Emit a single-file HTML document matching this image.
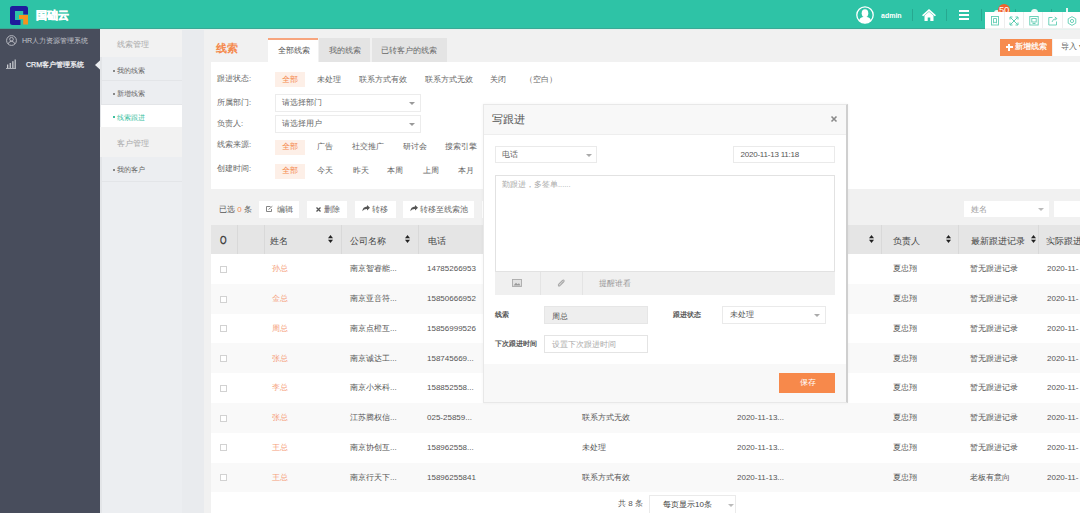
<!DOCTYPE html>
<html><head><meta charset="utf-8"><style>
*{margin:0;padding:0;box-sizing:border-box}
html,body{width:1080px;height:513px;overflow:hidden;background:#f1f1f1;font-family:"Liberation Sans",sans-serif;color:#555;font-size:8px}
.a{position:absolute}
.t{position:absolute;white-space:nowrap;line-height:12px;height:12px}
svg{position:absolute;overflow:visible}
</style></head><body>
<div class="a" style="left:0px;top:0px;width:1080px;height:28px;background:#2ec3a6"></div>
<svg style="left:10px;top:6px" width="18" height="19" viewBox="0 0 18 19"><path d="M2.5 0H15.5Q18 0 18 2.5V8.5H13.2V5H5V14H10.5V19H2.5Q0 19 0 16.5V2.5Q0 0 2.5 0Z" fill="#1f1c9c"/><path d="M9 9H18V18.5H13.2V13H9Z" fill="#f7931e"/></svg>
<div class="t" style="left:35.5px;top:8.8px;font-size:10.5px;color:#fff;font-weight:bold;-webkit-text-stroke:0.6px #fff">国础云</div>
<svg style="left:856px;top:6px" width="18" height="18" viewBox="0 0 18 18"><circle cx="9" cy="9" r="8.2" fill="none" stroke="#fff" stroke-width="1.3"/><ellipse cx="9" cy="7.2" rx="3.3" ry="4" fill="#fff"/><path d="M3 15Q3.5 11.5 7 11H11Q14.5 11.5 15 15Q12.5 17.2 9 17.2Q5.5 17.2 3 15Z" fill="#fff"/></svg>
<div class="t" style="left:881px;top:9.8px;font-size:7px;color:#fff;font-weight:bold">admin</div>
<div class="a" style="left:912px;top:9px;width:1px;height:12px;background:#27a890"></div>
<svg style="left:922px;top:9px" width="14" height="12" viewBox="0 0 14 12"><path d="M7 0L14 6.2L12.8 7.3L7 2.2L1.2 7.3L0 6.2Z" fill="#fff"/><path d="M2.5 6.5L7 2.8L11.5 6.5V12H8.3V8.5H5.7V12H2.5Z" fill="#fff"/></svg>
<div class="a" style="left:946px;top:9px;width:1px;height:12px;background:#27a890"></div>
<div class="a" style="left:959px;top:10px;width:10px;height:2px;background:#fff"></div>
<div class="a" style="left:959px;top:14px;width:10px;height:2px;background:#fff"></div>
<div class="a" style="left:959px;top:18px;width:10px;height:2px;background:#fff"></div>
<div class="a" style="left:981px;top:9px;width:1px;height:12px;background:#27a890"></div>
<div class="a" style="left:1015px;top:9px;width:1px;height:4px;background:#27a890"></div>
<div class="a" style="left:1051px;top:9px;width:1px;height:4px;background:#27a890"></div>
<div class="a" style="left:994px;top:10px;width:6px;height:3px;background:#e9f7f3;border-radius:3px 3px 0 0"></div>
<div class="a" style="left:1031px;top:9px;width:7px;height:4px;background:#e9f7f3;border-radius:4px 4px 0 0"></div>
<div class="a" style="left:1066px;top:8px;width:2px;height:5px;background:#e9f7f3"></div>
<div class="a" style="left:998px;top:3.5px;width:12px;height:12px;background:#f0622b;border-radius:50%"></div>
<div class="t" style="left:999px;top:3.5999999999999996px;font-size:9.5px;color:#fff;width:10px;text-align:center;letter-spacing:-0.3px">50</div>
<div class="a" style="left:985px;top:12px;width:95px;height:16px;background:#fff"></div>
<div class="a" style="left:1004px;top:12px;width:1px;height:16px;background:#eeeeee"></div>
<div class="a" style="left:1023px;top:12px;width:1px;height:16px;background:#eeeeee"></div>
<div class="a" style="left:1042px;top:12px;width:1px;height:16px;background:#eeeeee"></div>
<div class="a" style="left:1062px;top:12px;width:1px;height:16px;background:#eeeeee"></div>
<svg style="left:990px;top:16px" width="10" height="10" viewBox="0 0 10 10" fill="none" stroke="#5fcdb2" stroke-width="0.9"><rect x="1.5" y="0.5" width="7" height="8.5"/><path d="M3.5 2.5H6.5V7L5 6L3.5 7Z"/></svg>
<svg style="left:1009px;top:16px" width="10" height="10" viewBox="0 0 10 10" fill="none" stroke="#5fcdb2" stroke-width="1"><path d="M1.2 1.2L8.8 8.8M8.8 1.2L1.2 8.8"/><path d="M1 3.5V1H3.5M6.5 1H9V3.5M1 6.5V9H3.5M6.5 9H9V6.5"/></svg>
<svg style="left:1028.5px;top:16px" width="10" height="10" viewBox="0 0 10 10" fill="none" stroke="#5fcdb2" stroke-width="0.9"><rect x="0.8" y="0.5" width="8.4" height="8.5"/><rect x="2.8" y="2.5" width="4.4" height="3.5"/><path d="M3.5 7.5H6.5"/></svg>
<svg style="left:1047.5px;top:16px" width="10" height="10" viewBox="0 0 10 10" fill="none" stroke="#5fcdb2" stroke-width="0.9"><path d="M4.5 1.5H0.8V9H8.5V5.5"/><path d="M4 6Q4.5 3 8.5 2.5M6.8 1L8.8 2.5L7.2 4.3"/></svg>
<svg style="left:1067px;top:16px" width="10" height="10" viewBox="0 0 10 10" fill="none" stroke="#5fcdb2" stroke-width="0.9"><path d="M5 0.6L8.8 2.8V7.2L5 9.4L1.2 7.2V2.8Z"/><circle cx="5" cy="5" r="1.6"/></svg>
<div class="a" style="left:0px;top:28px;width:100px;height:485px;background:#484d5c"></div>
<svg style="left:6px;top:35px" width="11" height="11" viewBox="0 0 11 11" fill="none" stroke="#bfc1c7" stroke-width="0.9"><circle cx="5.5" cy="5.5" r="4.9"/><circle cx="5.5" cy="4.2" r="1.8"/><path d="M2.2 8.8Q3 6.3 5.5 6.3Q8 6.3 8.8 8.8"/></svg>
<div class="t" style="left:22px;top:35px;font-size:7.1px;color:#c4c6cc;">HR人力资源管理系统</div>
<svg style="left:6px;top:59px" width="10" height="10" viewBox="0 0 10 10" fill="#c9cbd0"><rect x="0" y="9" width="10" height="0.8"/><rect x="1" y="5.5" width="1.3" height="3.5"/><rect x="3.6" y="4" width="1.3" height="5"/><rect x="6.2" y="2.2" width="1.3" height="6.8"/><rect x="8.6" y="0.5" width="1.2" height="8.5"/></svg>
<div class="t" style="left:26px;top:59px;font-size:7.1px;color:#f0f0f2;-webkit-text-stroke:0.25px #f0f0f2">CRM客户管理系统</div>
<svg style="left:95px;top:60px" width="6" height="10" viewBox="0 0 6 10"><path d="M0 5L5.5 0V10Z" fill="#eceef1"/></svg>
<div class="a" style="left:100px;top:28px;width:82px;height:485px;background:#eceef1"></div>
<div class="a" style="left:100px;top:28px;width:2px;height:485px;background:#e3e5e8"></div>
<div class="a" style="left:182px;top:28px;width:22px;height:485px;background:#e9ebee"></div>
<div class="a" style="left:100px;top:28px;width:82px;height:29px;background:#f2f2f2"></div>
<div class="t" style="left:117px;top:39px;font-size:8px;color:#a8a8a8;">线索管理</div>
<div class="a" style="left:102px;top:80px;width:80px;height:1px;background:#e3e5e8"></div>
<div class="a" style="left:113px;top:70px;width:2px;height:2px;background:#888"></div>
<div class="t" style="left:117px;top:65px;font-size:7px;color:#666;">我的线索</div>
<div class="a" style="left:102px;top:104px;width:80px;height:1px;background:#e3e5e8"></div>
<div class="a" style="left:113px;top:92.5px;width:2px;height:2px;background:#888"></div>
<div class="t" style="left:117px;top:87.5px;font-size:7px;color:#666;">新增线索</div>
<div class="a" style="left:101px;top:105px;width:81px;height:23px;background:#fff"></div>
<div class="a" style="left:113px;top:116px;width:2px;height:2px;background:#3cbf9f"></div>
<div class="t" style="left:117px;top:111.5px;font-size:7px;color:#3cbf9f;">线索跟进</div>
<div class="a" style="left:100px;top:127px;width:82px;height:30px;background:#f2f2f2"></div>
<div class="t" style="left:117px;top:138px;font-size:8px;color:#a8a8a8;">客户管理</div>
<div class="a" style="left:113px;top:169px;width:2px;height:2px;background:#888"></div>
<div class="t" style="left:117px;top:164px;font-size:7px;color:#666;">我的客户</div>
<div class="a" style="left:102px;top:181px;width:80px;height:1px;background:#e3e5e8"></div>
<div class="a" style="left:0px;top:28px;width:985px;height:1px;background:#3aa996"></div>
<div class="a" style="left:100px;top:29px;width:980px;height:1px;background:#e6f2ef"></div>
<div class="t" style="left:216px;top:42px;font-size:11px;color:#f58a4e;font-weight:bold">线索</div>
<div class="a" style="left:268px;top:38px;width:50px;height:24px;background:#fff;border-top:2px solid #f7a57e"></div>
<div class="t" style="left:277.5px;top:44.5px;font-size:8px;color:#555;">全部线索</div>
<div class="a" style="left:319px;top:38px;width:51px;height:24px;background:#e4e4e4"></div>
<div class="t" style="left:328.5px;top:44.7px;font-size:8px;color:#666;">我的线索</div>
<div class="a" style="left:372px;top:38px;width:75px;height:24px;background:#e4e4e4"></div>
<div class="t" style="left:381px;top:44.7px;font-size:8px;color:#666;">已转客户的线索</div>
<div class="a" style="left:1000px;top:39px;width:52px;height:17px;background:#f78c4f"></div>
<div class="a" style="left:1006px;top:46px;width:6.5px;height:2px;background:#fff"></div>
<div class="a" style="left:1008.25px;top:43.5px;width:2px;height:7px;background:#fff"></div>
<div class="t" style="left:1015px;top:41.2px;font-size:7.7px;color:#fff;-webkit-text-stroke:0.2px #fff">新增线索</div>
<div class="a" style="left:1053px;top:39px;width:30px;height:17px;background:#fff"></div>
<div class="t" style="left:1061px;top:41px;font-size:8px;color:#666;">导入 ▾</div>
<div class="a" style="left:211px;top:62px;width:869px;height:127px;background:#fff"></div>
<div class="t" style="left:217px;top:73px;font-size:7.5px;color:#666;">跟进状态:</div>
<div class="a" style="left:275px;top:72px;width:30px;height:15px;background:#fdefe7"></div>
<div class="t" style="left:290px;top:74px;font-size:8px;color:#f58a4e;transform:translateX(-50%)">全部</div>
<div class="t" style="left:329px;top:74px;font-size:8px;color:#666;transform:translateX(-50%)">未处理</div>
<div class="t" style="left:383px;top:74px;font-size:8px;color:#666;transform:translateX(-50%)">联系方式有效</div>
<div class="t" style="left:449px;top:74px;font-size:8px;color:#666;transform:translateX(-50%)">联系方式无效</div>
<div class="t" style="left:498px;top:74px;font-size:8px;color:#666;transform:translateX(-50%)">关闭</div>
<div class="t" style="left:541px;top:74px;font-size:8px;color:#666;transform:translateX(-50%)">（空白）</div>
<div class="t" style="left:217px;top:97px;font-size:7.5px;color:#666;">所属部门:</div>
<div class="a" style="left:275px;top:94px;width:146px;height:18px;background:#fff;border:1px solid #ececec"></div>
<div class="t" style="left:282px;top:97px;font-size:7.5px;color:#666;">请选择部门</div>
<div class="a" style="left:409px;top:102px;border:3px solid transparent;border-top:3px solid #999;border-bottom:0"></div>
<div class="t" style="left:217px;top:117.7px;font-size:7.5px;color:#666;">负责人:</div>
<div class="a" style="left:275px;top:115px;width:146px;height:18px;background:#fff;border:1px solid #ececec"></div>
<div class="t" style="left:282px;top:118px;font-size:7.5px;color:#666;">请选择用户</div>
<div class="a" style="left:409px;top:123px;border:3px solid transparent;border-top:3px solid #999;border-bottom:0"></div>
<div class="t" style="left:217px;top:139px;font-size:7.5px;color:#666;">线索来源:</div>
<div class="a" style="left:275px;top:140px;width:30px;height:15px;background:#fdefe7"></div>
<div class="t" style="left:290px;top:140.5px;font-size:8px;color:#f58a4e;transform:translateX(-50%)">全部</div>
<div class="t" style="left:325px;top:140.5px;font-size:8px;color:#666;transform:translateX(-50%)">广告</div>
<div class="t" style="left:368px;top:140.5px;font-size:8px;color:#666;transform:translateX(-50%)">社交推广</div>
<div class="t" style="left:414.6px;top:140.5px;font-size:8px;color:#666;transform:translateX(-50%)">研讨会</div>
<div class="t" style="left:461px;top:140.5px;font-size:8px;color:#666;transform:translateX(-50%)">搜索引擎</div>
<div class="t" style="left:217px;top:163px;font-size:7.5px;color:#666;">创建时间:</div>
<div class="a" style="left:275px;top:164px;width:30px;height:15px;background:#fdefe7"></div>
<div class="t" style="left:290px;top:164.5px;font-size:8px;color:#f58a4e;transform:translateX(-50%)">全部</div>
<div class="t" style="left:325px;top:164.5px;font-size:8px;color:#666;transform:translateX(-50%)">今天</div>
<div class="t" style="left:360.6px;top:164.5px;font-size:8px;color:#666;transform:translateX(-50%)">昨天</div>
<div class="t" style="left:395px;top:164.5px;font-size:8px;color:#666;transform:translateX(-50%)">本周</div>
<div class="t" style="left:430.7px;top:164.5px;font-size:8px;color:#666;transform:translateX(-50%)">上周</div>
<div class="t" style="left:465.6px;top:164.5px;font-size:8px;color:#666;transform:translateX(-50%)">本月</div>
<div class="t" style="left:219px;top:204px;font-size:8px;color:#555;">已选 <span style="color:#f58a4e">0</span> 条</div>
<div class="a" style="left:259px;top:201px;width:40px;height:17px;background:#fff"></div>
<div class="a" style="left:307px;top:201px;width:40px;height:17px;background:#fff"></div>
<div class="a" style="left:355px;top:201px;width:41px;height:17px;background:#fff"></div>
<div class="a" style="left:403px;top:201px;width:71px;height:17px;background:#fff"></div>
<div class="a" style="left:482px;top:201px;width:30px;height:17px;background:#fff"></div>
<svg style="left:266px;top:206px" width="7" height="6" viewBox="0 0 7 6" fill="none" stroke="#777" stroke-width="0.9"><path d="M4.5 0.5H0.5V5.5H5.5V3"/><path d="M2.5 3.5L6.3 0.3"/></svg>
<div class="t" style="left:277px;top:204px;font-size:8px;color:#666;">编辑</div>
<svg style="left:315.5px;top:206.5px" width="5" height="5" viewBox="0 0 5 5" fill="none" stroke="#555" stroke-width="1.3"><path d="M0.5 0.5L4.5 4.5M4.5 0.5L0.5 4.5"/></svg>
<div class="t" style="left:324px;top:204px;font-size:8px;color:#666;">删除</div>
<svg style="left:362px;top:205px" width="8" height="7" viewBox="0 0 8 7" fill="#555"><path d="M5 0L8 2.8L5 5.6V4Q2 3.8 0.3 6.3Q0.8 1.8 5 1.5Z"/></svg>
<div class="t" style="left:372px;top:204px;font-size:8px;color:#666;">转移</div>
<svg style="left:410px;top:205px" width="8" height="7" viewBox="0 0 8 7" fill="#555"><path d="M5 0L8 2.8L5 5.6V4Q2 3.8 0.3 6.3Q0.8 1.8 5 1.5Z"/></svg>
<div class="t" style="left:420px;top:204px;font-size:8px;color:#666;">转移至线索池</div>
<div class="a" style="left:964px;top:201px;width:85px;height:16px;background:#fff"></div>
<div class="t" style="left:971px;top:204px;font-size:8px;color:#999;">姓名</div>
<div class="a" style="left:1038px;top:208px;border:3px solid transparent;border-top:3px solid #bbb;border-bottom:0"></div>
<div class="a" style="left:1054px;top:201px;width:30px;height:16px;background:#fff"></div>
<div class="a" style="left:211px;top:225px;width:869px;height:29px;background:#e5e5e5"></div>
<div class="a" style="left:237px;top:225px;width:1px;height:29px;background:#d9d9d9"></div>
<div class="a" style="left:264px;top:225px;width:1px;height:29px;background:#d9d9d9"></div>
<div class="a" style="left:341px;top:225px;width:1px;height:29px;background:#d9d9d9"></div>
<div class="a" style="left:418px;top:225px;width:1px;height:29px;background:#d9d9d9"></div>
<div class="a" style="left:881px;top:225px;width:1px;height:29px;background:#d9d9d9"></div>
<div class="a" style="left:958px;top:225px;width:1px;height:29px;background:#d9d9d9"></div>
<div class="a" style="left:1038px;top:225px;width:1px;height:29px;background:#d9d9d9"></div>
<div class="t" style="left:219.5px;top:234px;font-size:10.5px;color:#333;transform:scaleX(.8);transform-origin:left;-webkit-text-stroke:0.3px #333">O</div>
<div class="t" style="left:270px;top:235px;font-size:8.5px;color:#444;">姓名</div>
<svg style="left:328px;top:235px" width="5" height="8" viewBox="0 0 5 8" fill="#222"><path d="M2.5 0L5 3.3H0Z"/><path d="M2.5 8L5 4.7H0Z"/></svg>
<div class="t" style="left:350px;top:235px;font-size:8.5px;color:#444;">公司名称</div>
<svg style="left:405px;top:235px" width="5" height="8" viewBox="0 0 5 8" fill="#222"><path d="M2.5 0L5 3.3H0Z"/><path d="M2.5 8L5 4.7H0Z"/></svg>
<div class="t" style="left:428px;top:235px;font-size:8.5px;color:#444;">电话</div>
<svg style="left:869px;top:235px" width="5" height="8" viewBox="0 0 5 8" fill="#222"><path d="M2.5 0L5 3.3H0Z"/><path d="M2.5 8L5 4.7H0Z"/></svg>
<div class="t" style="left:893px;top:235px;font-size:8.5px;color:#444;">负责人</div>
<svg style="left:946px;top:235px" width="5" height="8" viewBox="0 0 5 8" fill="#222"><path d="M2.5 0L5 3.3H0Z"/><path d="M2.5 8L5 4.7H0Z"/></svg>
<div class="t" style="left:971px;top:235px;font-size:8.5px;color:#444;">最新跟进记录</div>
<svg style="left:1031px;top:235px" width="5" height="8" viewBox="0 0 5 8" fill="#222"><path d="M2.5 0L5 3.3H0Z"/><path d="M2.5 8L5 4.7H0Z"/></svg>
<div class="t" style="left:1046px;top:235px;font-size:8.5px;color:#444;">实际跟进</div>
<div class="a" style="left:211px;top:254px;width:869px;height:30px;background:#fff"></div>
<div class="a" style="left:220px;top:266px;width:7px;height:7px;background:#fff;border:1px solid #d2d2d2"></div>
<div class="t" style="left:272px;top:263.2px;font-size:8px;color:#f5a07a;">孙总</div>
<div class="t" style="left:350px;top:263.2px;font-size:8px;color:#555;">南京智睿能...</div>
<div class="t" style="left:427px;top:263.2px;font-size:8px;color:#555;">14785266953</div>
<div class="t" style="left:893px;top:263.2px;font-size:8px;color:#555;">夏忠翔</div>
<div class="t" style="left:970px;top:263.2px;font-size:8px;color:#555;">暂无跟进记录</div>
<div class="t" style="left:1047px;top:263.2px;font-size:8px;color:#555;">2020-11-</div>
<div class="a" style="left:211px;top:284px;width:869px;height:30px;background:#f9f9f9"></div>
<div class="a" style="left:220px;top:296px;width:7px;height:7px;background:#fff;border:1px solid #d2d2d2"></div>
<div class="t" style="left:272px;top:293.0px;font-size:8px;color:#f5a07a;">金总</div>
<div class="t" style="left:350px;top:293.0px;font-size:8px;color:#555;">南京亚音符...</div>
<div class="t" style="left:427px;top:293.0px;font-size:8px;color:#555;">15850666952</div>
<div class="t" style="left:893px;top:293.0px;font-size:8px;color:#555;">夏忠翔</div>
<div class="t" style="left:970px;top:293.0px;font-size:8px;color:#555;">暂无跟进记录</div>
<div class="t" style="left:1047px;top:293.0px;font-size:8px;color:#555;">2020-11-</div>
<div class="a" style="left:211px;top:314px;width:869px;height:29px;background:#fff"></div>
<div class="a" style="left:220px;top:325px;width:7px;height:7px;background:#fff;border:1px solid #d2d2d2"></div>
<div class="t" style="left:272px;top:322.8px;font-size:8px;color:#f5a07a;">周总</div>
<div class="t" style="left:350px;top:322.8px;font-size:8px;color:#555;">南京点橙互...</div>
<div class="t" style="left:427px;top:322.8px;font-size:8px;color:#555;">15856999526</div>
<div class="t" style="left:893px;top:322.8px;font-size:8px;color:#555;">夏忠翔</div>
<div class="t" style="left:970px;top:322.8px;font-size:8px;color:#555;">暂无跟进记录</div>
<div class="t" style="left:1047px;top:322.8px;font-size:8px;color:#555;">2020-11-</div>
<div class="a" style="left:211px;top:343px;width:869px;height:30px;background:#f9f9f9"></div>
<div class="a" style="left:220px;top:355px;width:7px;height:7px;background:#fff;border:1px solid #d2d2d2"></div>
<div class="t" style="left:272px;top:352.59999999999997px;font-size:8px;color:#f5a07a;">张总</div>
<div class="t" style="left:350px;top:352.59999999999997px;font-size:8px;color:#555;">南京诚达工...</div>
<div class="t" style="left:427px;top:352.59999999999997px;font-size:8px;color:#555;">158745669...</div>
<div class="t" style="left:893px;top:352.59999999999997px;font-size:8px;color:#555;">夏忠翔</div>
<div class="t" style="left:970px;top:352.59999999999997px;font-size:8px;color:#555;">暂无跟进记录</div>
<div class="t" style="left:1047px;top:352.59999999999997px;font-size:8px;color:#555;">2020-11-</div>
<div class="a" style="left:211px;top:373px;width:869px;height:30px;background:#fff"></div>
<div class="a" style="left:220px;top:385px;width:7px;height:7px;background:#fff;border:1px solid #d2d2d2"></div>
<div class="t" style="left:272px;top:382.4px;font-size:8px;color:#f5a07a;">李总</div>
<div class="t" style="left:350px;top:382.4px;font-size:8px;color:#555;">南京小米科...</div>
<div class="t" style="left:427px;top:382.4px;font-size:8px;color:#555;">158852558...</div>
<div class="t" style="left:893px;top:382.4px;font-size:8px;color:#555;">夏忠翔</div>
<div class="t" style="left:970px;top:382.4px;font-size:8px;color:#555;">暂无跟进记录</div>
<div class="t" style="left:1047px;top:382.4px;font-size:8px;color:#555;">2020-11-</div>
<div class="a" style="left:211px;top:403px;width:869px;height:30px;background:#f9f9f9"></div>
<div class="a" style="left:220px;top:415px;width:7px;height:7px;background:#fff;border:1px solid #d2d2d2"></div>
<div class="t" style="left:272px;top:412.2px;font-size:8px;color:#f5a07a;">张总</div>
<div class="t" style="left:350px;top:412.2px;font-size:8px;color:#555;">江苏腾权信...</div>
<div class="t" style="left:427px;top:412.2px;font-size:8px;color:#555;">025-25859...</div>
<div class="t" style="left:582px;top:412.2px;font-size:8px;color:#555;">联系方式无效</div>
<div class="t" style="left:737px;top:412.2px;font-size:8px;color:#555;">2020-11-13...</div>
<div class="t" style="left:893px;top:412.2px;font-size:8px;color:#555;">夏忠翔</div>
<div class="t" style="left:970px;top:412.2px;font-size:8px;color:#555;">暂无跟进记录</div>
<div class="t" style="left:1047px;top:412.2px;font-size:8px;color:#555;">2020-11-</div>
<div class="a" style="left:211px;top:433px;width:869px;height:30px;background:#fff"></div>
<div class="a" style="left:220px;top:444px;width:7px;height:7px;background:#fff;border:1px solid #d2d2d2"></div>
<div class="t" style="left:272px;top:442.0px;font-size:8px;color:#f5a07a;">王总</div>
<div class="t" style="left:350px;top:442.0px;font-size:8px;color:#555;">南京协创互...</div>
<div class="t" style="left:427px;top:442.0px;font-size:8px;color:#555;">158962558...</div>
<div class="t" style="left:582px;top:442.0px;font-size:8px;color:#555;">未处理</div>
<div class="t" style="left:737px;top:442.0px;font-size:8px;color:#555;">2020-11-13...</div>
<div class="t" style="left:893px;top:442.0px;font-size:8px;color:#555;">夏忠翔</div>
<div class="t" style="left:970px;top:442.0px;font-size:8px;color:#555;">暂无跟进记录</div>
<div class="t" style="left:1047px;top:442.0px;font-size:8px;color:#555;">2020-11-</div>
<div class="a" style="left:211px;top:463px;width:869px;height:29px;background:#f9f9f9"></div>
<div class="a" style="left:220px;top:474px;width:7px;height:7px;background:#fff;border:1px solid #d2d2d2"></div>
<div class="t" style="left:272px;top:471.8px;font-size:8px;color:#f5a07a;">王总</div>
<div class="t" style="left:350px;top:471.8px;font-size:8px;color:#555;">南京行天下...</div>
<div class="t" style="left:427px;top:471.8px;font-size:8px;color:#555;">15896255841</div>
<div class="t" style="left:582px;top:471.8px;font-size:8px;color:#555;">联系方式有效</div>
<div class="t" style="left:737px;top:471.8px;font-size:8px;color:#555;">2020-11-13...</div>
<div class="t" style="left:893px;top:471.8px;font-size:8px;color:#555;">夏忠翔</div>
<div class="t" style="left:970px;top:471.8px;font-size:8px;color:#555;">老板有意向</div>
<div class="t" style="left:1047px;top:471.8px;font-size:8px;color:#555;">2020-11-</div>
<div class="a" style="left:211px;top:492px;width:869px;height:21px;background:#fff"></div>
<div class="t" style="left:618px;top:498px;font-size:8px;color:#555;">共 8 条</div>
<div class="a" style="left:649px;top:495px;width:87px;height:20px;background:#fff;border:1px solid #eaeaea"></div>
<div class="t" style="left:663px;top:499px;font-size:8px;color:#444;">每页显示10条</div>
<div class="a" style="left:728px;top:504px;border:3px solid transparent;border-top:3px solid #bbb;border-bottom:0"></div>
<div class="a" style="left:483px;top:104px;width:365px;height:299px;background:#fff;border:1px solid #e8e8e8;border-right:2px solid #cfcfcf;box-shadow:0 0 3px rgba(0,0,0,.05)"></div>
<div class="a" style="left:484px;top:105px;width:362px;height:30px;background:#f8f8f8;border-bottom:1px solid #eee"></div>
<div class="t" style="left:492px;top:113px;font-size:11px;color:#555;">写跟进</div>
<svg style="left:831px;top:116px" width="6" height="6" viewBox="0 0 6 6" stroke="#8a8a8a" stroke-width="1.6"><path d="M0.5 0.5L5.5 5.5M5.5 0.5L0.5 5.5"/></svg>
<div class="a" style="left:495px;top:146px;width:102px;height:17px;background:#fff;border:1px solid #eaeaea"></div>
<div class="t" style="left:502px;top:149px;font-size:7.5px;color:#666;">电话</div>
<div class="a" style="left:586px;top:154px;border:3px solid transparent;border-top:3px solid #aaa;border-bottom:0"></div>
<div class="a" style="left:733px;top:146px;width:102px;height:17px;background:#fff;border:1px solid #eaeaea"></div>
<div class="t" style="left:740.5px;top:148.5px;font-size:8px;color:#555;letter-spacing:-0.22px">2020-11-13 11:18</div>
<div class="a" style="left:495px;top:175px;width:340px;height:97px;background:#fff;border:1px solid #e2e2e2"></div>
<div class="t" style="left:502px;top:178.5px;font-size:7.5px;color:#aaa;">勤跟进，多签单......</div>
<div class="a" style="left:495px;top:272px;width:340px;height:23px;background:#f0f0f0"></div>
<div class="a" style="left:540px;top:272px;width:1px;height:23px;background:#e4e4e4"></div>
<div class="a" style="left:582px;top:272px;width:1px;height:23px;background:#e4e4e4"></div>
<svg style="left:512px;top:279px" width="10" height="8" viewBox="0 0 10 8" fill="#e2e2e2" stroke="#aaa" stroke-width="0.9"><rect x="0.5" y="0.5" width="9" height="7"/><path d="M1.5 6.5L4 3.8L5.5 5.3L7 4.2L8.5 6.5Z" fill="#999" stroke="none"/></svg>
<svg style="left:557px;top:279px" width="8" height="9" viewBox="0 0 8 9" fill="none" stroke="#aaa" stroke-width="1.1"><path d="M6 3L3 6.5Q2 7.5 1.5 6.8Q1 6 2 5L5.5 1.5Q6.5 0.6 7 1.3Q7.5 2 6.5 3L3.5 6"/></svg>
<div class="t" style="left:599px;top:278.4px;font-size:8px;color:#999;">提醒谁看</div>
<div class="t" style="left:495px;top:309px;font-size:7px;color:#555;font-weight:bold">线索</div>
<div class="a" style="left:544px;top:306px;width:104px;height:18px;background:#eeeeee;border:1px solid #e6e6e6"></div>
<div class="t" style="left:552px;top:310.8px;font-size:8px;color:#555;">周总</div>
<div class="t" style="left:673px;top:309px;font-size:7px;color:#555;font-weight:bold">跟进状态</div>
<div class="a" style="left:722px;top:306px;width:104px;height:18px;background:#fff;border:1px solid #eaeaea"></div>
<div class="t" style="left:730px;top:309px;font-size:8px;color:#555;">未处理</div>
<div class="a" style="left:814px;top:314px;border:3px solid transparent;border-top:3px solid #aaa;border-bottom:0"></div>
<div class="t" style="left:495px;top:338px;font-size:7px;color:#555;font-weight:bold">下次跟进时间</div>
<div class="a" style="left:544px;top:335px;width:104px;height:18px;background:#fff;border:1px solid #e4e4e4"></div>
<div class="t" style="left:552px;top:338.6px;font-size:7.5px;color:#aaa;">设置下次跟进时间</div>
<div class="a" style="left:484px;top:364px;width:362px;height:38px;background:#f8f8f8"></div>
<div class="a" style="left:779px;top:373px;width:56px;height:20px;background:#f7894b"></div>
<div class="t" style="left:800px;top:377px;font-size:8px;color:#fff;">保存</div>
</body></html>
